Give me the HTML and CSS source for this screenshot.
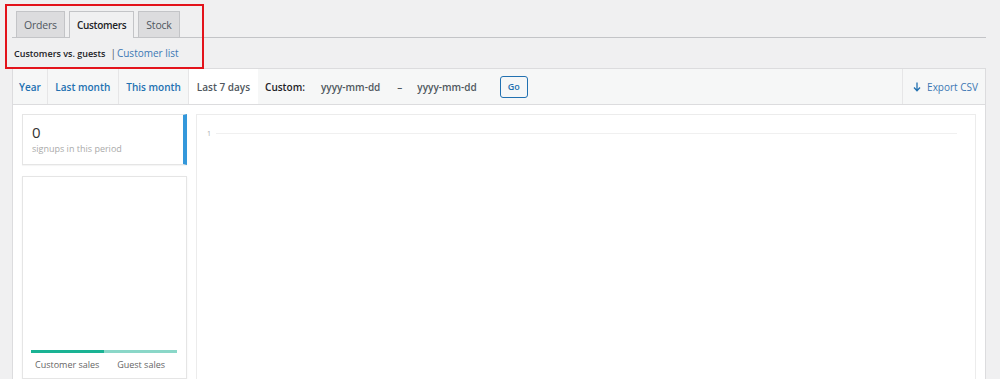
FILE: index.html
```html
<!DOCTYPE html>
<html>
  <head>
    <meta charset="UTF-8"/>
    <link rel="stylesheet" href="styles.css">
  </head>
  <body>
    <div class="wrap">
      <div class="highlight"></div>
      <nav class="nav-tabs">
        <a class="nav-tab">Orders</a>
        <a class="nav-tab active">Customers</a>
        <a class="nav-tab">Stock</a>
      </nav>
      <ul class="subsubsub">
        <li class="current">Customers vs. guests</li>
        <li class="sep">|</li>
        <li><a>Customer list</a></li>
      </ul>
      <div class="postbox">
        <div class="stats-range">
          <ul class="ranges">
            <li class="first"><a>Year</a></li>
            <li><a>Last month</a></li>
            <li><a>This month</a></li>
            <li class="active">Last 7 days</li>
            <li class="custom">
              <span class="label">Custom:</span>
              <span class="date">yyyy-mm-dd</span>
              <span class="dash">&ndash;</span>
              <span class="date">yyyy-mm-dd</span>
              <span class="go">Go</span>
            </li>
          </ul>
          <div class="export">
            <svg width="8" height="10" viewBox="0 0 8 10"><path d="M4 0.5V8.5M1 5.5L4 8.8L7 5.5" fill="none" stroke="#2271b1" stroke-width="1.3"/></svg>
            <a>Export CSV</a>
          </div>
        </div>
        <div class="inside">
          <div class="sidebar">
            <div class="legend-item">
              <strong>0</strong>
              <span>signups in this period</span>
            </div>
            <div class="pie-box">
              <div class="pie-legend">
                <div class="bars">
                  <div class="bar customer"></div>
                  <div class="bar guest"></div>
                </div>
                <div class="labels">
                  <span>Customer sales</span>
                  <span>Guest sales</span>
                </div>
              </div>
            </div>
          </div>
          <div class="chart">
            <div class="axis-row">
              <span class="tick">1</span>
              <div class="grid-line"></div>
            </div>
          </div>
        </div>
      </div>
    </div>
  </body>
</html>
```

FILE: styles.css
```css
body
{
  margin: 0;
  padding: 0;
  background: #f0f0f1;
  font-family: "Open Sans", "Noto Sans", sans-serif;
  font-size: 10px;
  color: #1d2327;
  height: 379px;
  overflow: hidden;
}
a
{
  color: #2271b1;
  text-decoration: none;
}
.wrap
{
  position: relative;
  padding: 11px 14px 0 12px;
}
.highlight
{
  position: absolute;
  left: 5px;
  top: 4px;
  width: 195px;
  height: 61px;
  border: 2px solid #e3131b;
  z-index: 2;
}
.nav-tabs
{
  display: flex;
  gap: 4px;
  padding-left: 4px;
  border-bottom: 1px solid #c3c4c7;
  height: 26px;
}
.nav-tab
{
  display: flex;
  align-items: center;
  padding: 0 7px;
  border: 1px solid #c3c4c7;
  border-bottom: none;
  background: #dcdcde;
  color: #50575e;
  font-size: 10.5px;
  letter-spacing: -0.2px;
}
.nav-tab.active
{
  background: #f0f0f1;
  color: #1d2327;
  height: 26px;
  margin-bottom: -1px;
  font-weight: 600;
  font-size: 10px;
  letter-spacing: -0.3px;
}
.subsubsub
{
  list-style: none;
  margin: 0;
  padding: 8px 0 0 2px;
  display: flex;
  align-items: baseline;
  gap: 3px;
  height: 22px;
  font-size: 9px;
}
.subsubsub .current
{
  font-weight: 600;
  color: #1d2327;
}
.subsubsub .sep
{
  color: #50575e;
  margin-left: 2px;
  margin-right: -2px;
  font-size: 10px;
}
.subsubsub a
{
  font-size: 10px;
  color: #3c78b4;
}
.postbox
{
  background: #fff;
  border: 1px solid #dcdcde;
  height: 320px;
}
.stats-range
{
  display: flex;
  justify-content: space-between;
  background: #f6f7f7;
  border-bottom: 1px solid #dcdcde;
  height: 35px;
}
.ranges
{
  list-style: none;
  margin: 0;
  padding: 0;
  display: flex;
}
.ranges li
{
  display: flex;
  align-items: center;
  padding: 0 7.5px;
  border-right: 1px solid #e6e6e7;
  font-weight: 600;
}
.ranges li.first
{
  padding: 0 6px;
}
.ranges li.active
{
  background: #fff;
  color: #50575e;
  border-right: none;
}
.ranges li.custom
{
  border-right: none;
  color: #1d2327;
}
.custom .date
{
  color: #50575e;
  margin-left: 16px;
}
.custom .dash
{
  color: #50575e;
  margin-left: 17px;
}
.custom .date + .go
{
  margin-left: 23px;
}
.custom .dash + .date
{
  margin-left: 15px;
}
.custom .go
{
  border: 1px solid #2271b1;
  border-radius: 3px;
  background: #f6f7f7;
  color: #2271b1;
  font-size: 9px;
  width: 26px;
  height: 20px;
  display: flex;
  align-items: center;
  justify-content: center;
}
.export
{
  display: flex;
  align-items: center;
  gap: 6px;
  padding: 0 7px 0 10px;
  border-left: 1px solid #e6e6e7;
}
.export a
{
  color: #3c78b4;
}
.inside
{
  display: flex;
  gap: 9px;
  padding: 9px 9px 0 9px;
}
.sidebar
{
  width: 165px;
  display: flex;
  flex-direction: column;
  gap: 11px;
}
.legend-item
{
  background: #fff;
  border: 1px solid #e5e5e5;
  border-right: 4px solid #3498db;
  box-shadow: 0 1px 1px rgba(0,0,0,0.04);
  height: 49px;
  padding: 0 9px;
  display: flex;
  flex-direction: column;
  justify-content: center;
}
.legend-item strong
{
  font-weight: 400;
  font-size: 15px;
  line-height: 19px;
  color: #333;
}
.legend-item span
{
  color: #aaa;
  font-size: 9px;
  line-height: 14px;
}
.pie-box
{
  border: 1px solid #e5e5e5;
  box-shadow: 0 1px 2px rgba(0,0,0,0.06);
  height: 194px;
  display: flex;
  flex-direction: column;
  justify-content: flex-end;
  padding: 0 9px 7px 8px;
}
.bars
{
  display: flex;
  height: 3px;
}
.bar
{
  flex: 1;
}
.bar.customer
{
  background: #1ab394;
}
.bar.guest
{
  background: #8ad7c8;
}
.labels
{
  display: flex;
  justify-content: space-between;
  color: #666;
  font-size: 9px;
  padding: 5px 12px 0 4px;
}
.chart
{
  flex: 1;
  border: 1px solid #ececec;
  border-bottom: none;
  height: 270px;
  padding: 14px 18px 0 10px;
}
.axis-row
{
  display: flex;
  align-items: center;
  gap: 5px;
}
.tick
{
  font-size: 7px;
  color: #aaa;
}
.grid-line
{
  flex: 1;
  border-top: 1px solid #f0f0f0;
}
```
